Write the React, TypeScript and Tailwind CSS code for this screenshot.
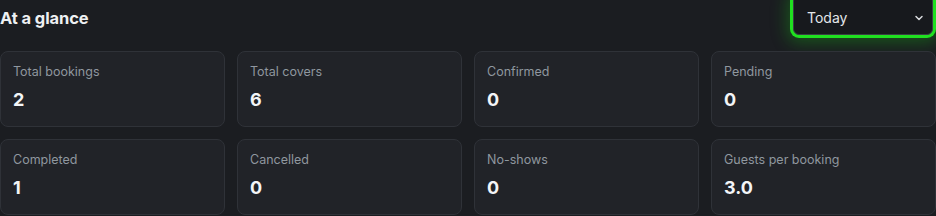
import React from "react";

const stats = [
  { label: "Total bookings", value: "2" },
  { label: "Total covers", value: "6" },
  { label: "Confirmed", value: "0" },
  { label: "Pending", value: "0" },
  { label: "Completed", value: "1" },
  { label: "Cancelled", value: "0" },
  { label: "No-shows", value: "0" },
  { label: "Guests per booking", value: "3.0" },
];

export default function App() {
  return (
    <div className="w-[936px] h-[216px] overflow-hidden bg-[#1b1d21] font-['Inter',sans-serif]">
      <div className="flex h-[35px] items-start justify-between">
        <h2 className="mt-[6px] text-[16.5px] font-bold leading-6 text-[#eef0f2] tracking-[-0.1px]">At a glance</h2>
        <div className="-mt-[5px] mr-[3px] flex h-[40px] w-[140px] items-center justify-between rounded-md border border-[#3a3e44] bg-[#17191d] pl-[13px] pr-[7px] pt-[5px] shadow-[0_0_0_3px_#20e020,0_2px_16px_6px_rgba(20,180,20,0.35)]">
          <span className="text-[14px] text-[#e4e6e9]">Today</span>
          <svg width="12" height="12" viewBox="0 0 24 24" fill="none" stroke="#d8dadd" strokeWidth="3" strokeLinecap="round" strokeLinejoin="round">
            <path d="m6 9 6 6 6-6" />
          </svg>
        </div>
      </div>
      <div className="mt-4 grid grid-cols-4 gap-3">
        {stats.map((s) => (
          <div
            key={s.label}
            className="flex h-[76px] flex-col rounded-lg border border-[#2f3238] bg-[#212328] px-3 pt-3"
          >
            <div className="text-[12.5px] leading-4 text-[#8f979f]">{s.label}</div>
            <div className="mt-1.5 text-[18px] font-bold leading-7 text-[#f3f5f7]">{s.value}</div>
          </div>
        ))}
      </div>
    </div>
  );
}
